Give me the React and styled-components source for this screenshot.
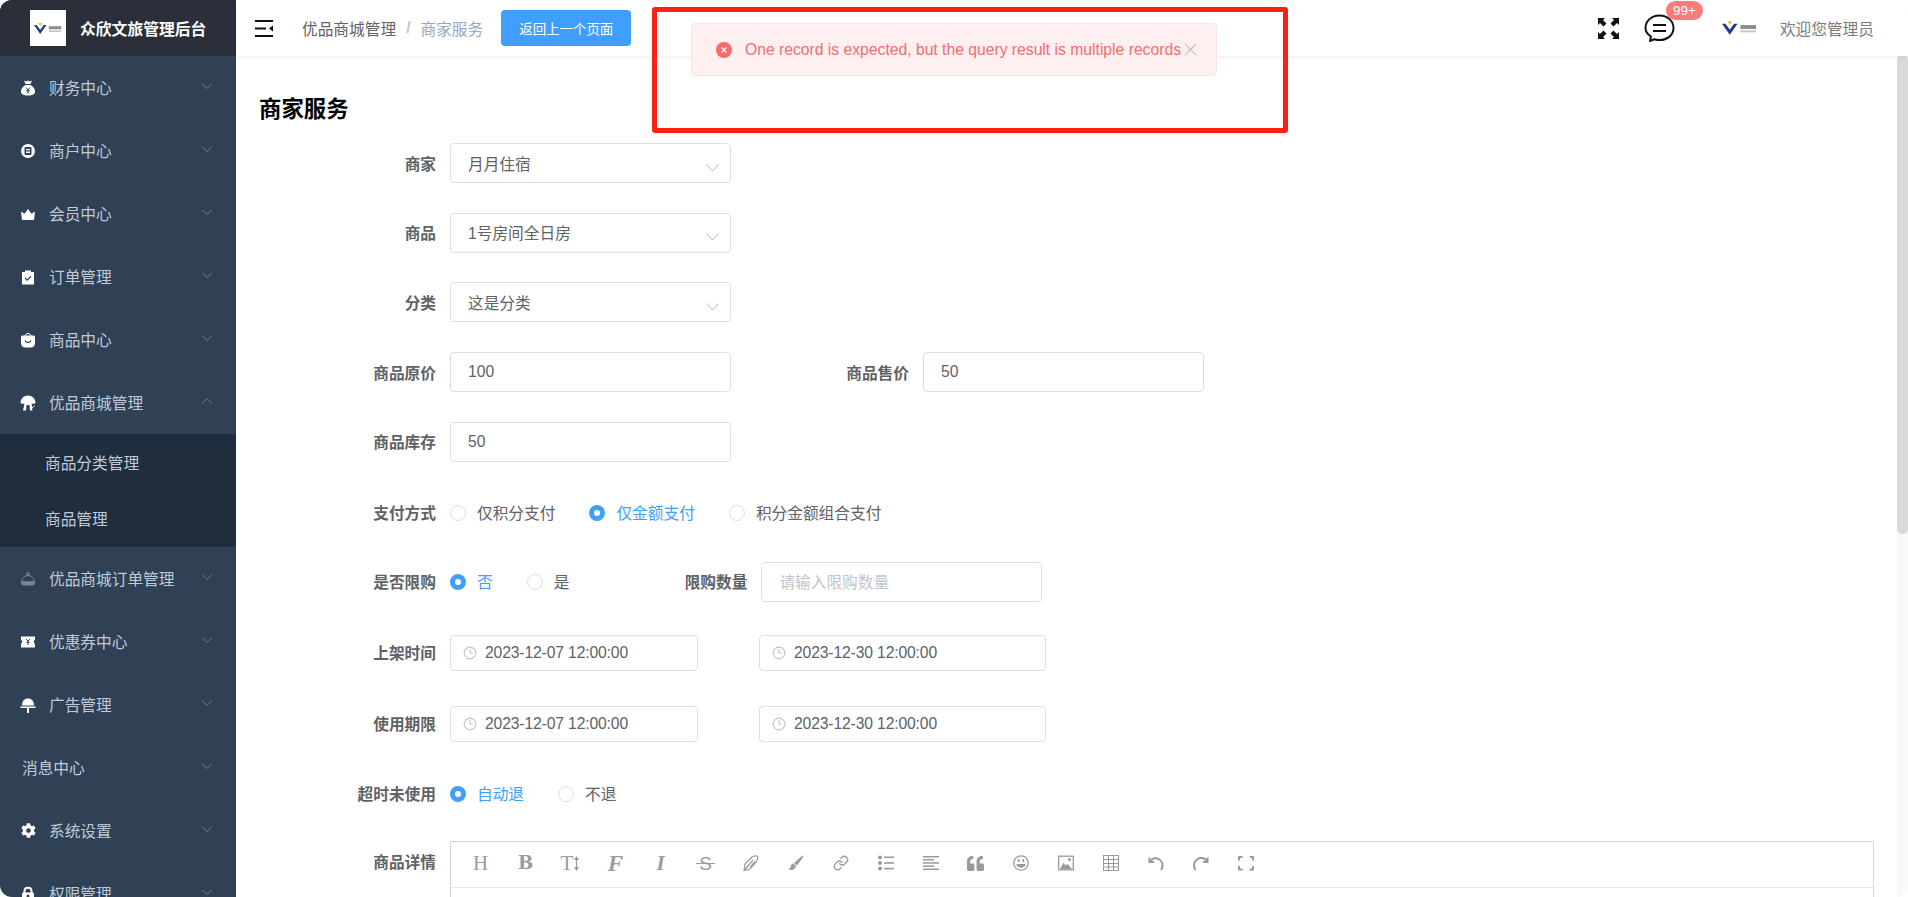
import React from "react";
import styled, { createGlobalStyle } from "styled-components";
import { FaCog, FaQuoteLeft } from "react-icons/fa";
import { LuLink, LuClock3 } from "react-icons/lu";

const FONT = `"Liberation Sans", "Noto Sans CJK SC", sans-serif`;

const Global = createGlobalStyle`
  html, body { margin: 0; padding: 0; height: 100%; overflow: hidden; background: #fff; }
  * { box-sizing: border-box; }
  body { font-family: ${FONT}; font-size: 15.7px; color: #606266; }
`;

const Frame = styled.div`
  position: relative;
  display: flex;
  width: 1908px;
  height: 897px;
  overflow: hidden;
  border-radius: 12px;
  background: #fff;
`;

const Sidebar = styled.aside`
  flex: 0 0 236px;
  height: 897px;
  overflow: hidden;
  background: #304156;
`;
const Brand = styled.div`
  display: flex;
  align-items: center;
  height: 56px;
  padding-left: 30px;
  background: #2b2f3a;
`;
const BrandLogo = styled.div`
  display: flex;
  align-items: center;
  justify-content: center;
  width: 36px;
  height: 36px;
  background: #fff;
`;
const BrandTitle = styled.span`
  margin-left: 14px;
  color: #fff;
  font-size: 15.8px;
  font-weight: 700;
`;
const MenuRow = styled.div`
  display: flex;
  align-items: center;
  height: 63px;
  padding-left: ${p => (p.$plain ? 22 : 20)}px;
  padding-right: 24px;
  color: #bfcbd9;
`;
const MenuIcon = styled.span`
  display: flex;
  align-items: center;
  justify-content: center;
  flex: 0 0 16px;
  margin-right: 13px;
  color: #fff;
`;
const MenuText = styled.span`
  flex: 1;
`;
const Chevron = styled.svg`
  width: 10px;
  height: 6px;
  margin-top: -4px;
  fill: none;
  stroke: #75808e;
  stroke-width: 1;
`;
const SubMenu = styled.div`
  height: 113px;
  background: #1f2d3d;
`;
const SubRow = styled.div`
  display: flex;
  align-items: center;
  height: 56.5px;
  padding-left: 45px;
  color: #bfcbd9;
`;

const Main = styled.main`
  flex: 1;
  min-width: 0;
  display: flex;
  flex-direction: column;
`;
const TopBar = styled.header`
  position: relative;
  z-index: 1;
  display: flex;
  align-items: center;
  flex: 0 0 56px;
  padding: 0 34px 0 19px;
  background: #fff;
  box-shadow: 0 1px 4px rgba(0, 21, 41, 0.08);
`;
const Crumbs = styled.div`
  display: flex;
  align-items: center;
  margin-left: 29px;
  color: #5f6266;
`;
const CrumbSep = styled.span`
  margin: 0 10px;
  color: #c0c4cc;
  font-weight: 700;
`;
const CrumbNow = styled.span`
  color: #97a8be;
`;
const BackButton = styled.button`
  width: 130px;
  height: 36px;
  margin-left: 18px;
  padding: 0;
  border: 0;
  border-radius: 4px;
  background: #409eff;
  color: #fff;
  font-family: ${FONT};
  font-size: 13.44px;
`;
const TopRight = styled.div`
  display: flex;
  align-items: center;
  margin-left: auto;
`;
const ChatWrap = styled.div`
  position: relative;
  display: flex;
  margin: 0 47px 0 24px;
`;
const Badge = styled.span`
  position: absolute;
  left: 22px;
  top: -13px;
  width: 37px;
  height: 19px;
  border-radius: 10px;
  background: #f97b7b;
  color: #fff;
  font-size: 13.44px;
  line-height: 19px;
  text-align: center;
`;
const Welcome = styled.span`
  margin-left: 23px;
  color: #7b7b7b;
`;

const Content = styled.div`
  flex: 1;
  overflow: hidden;
  padding-right: 34px;
`;
const Title = styled.h1`
  margin: 39px 0 18px 23px;
  height: 30px;
  color: #000;
  font-size: 22.4px;
  font-weight: 700;
  line-height: 30px;
`;
const Row = styled.div`
  display: flex;
  align-items: ${p => (p.$top ? "flex-start" : "center")};
  height: ${p => p.$h || 40}px;
  margin-bottom: ${p => p.$mb ?? 29.7}px;
`;
const Label = styled.label`
  flex: 0 0 ${p => p.$w || 214}px;
  padding-right: 14px;
  color: #606266;
  font-weight: 700;
  line-height: ${p => p.$lh || "normal"};
  text-align: right;
`;
const FieldBox = styled.div`
  display: flex;
  align-items: center;
  flex: 0 0 ${p => p.$w}px;
  height: ${p => p.$h || 40}px;
  margin-left: ${p => p.$ml || 0}px;
  padding: 0 ${p => (p.$date ? 8 : 17)}px;
  border: 1px solid #dcdfe6;
  border-radius: 4px;
  background: #fff;
  color: ${p => (p.$ph ? "#c0c4cc" : "#606266")};
`;
const SelectValue = styled.span`
  flex: 1;
`;
const SelectArrow = styled.svg`
  width: 13px;
  height: 8px;
  margin: 9px -6px 0 0;
  fill: none;
  stroke: #b4b8bf;
  stroke-width: 1;
`;
const DateIcon = styled(LuClock3)`
  flex: none;
  margin-left: 4px;
  color: #c0c4cc;
`;
const DateText = styled.span`
  margin-left: 8px;
  letter-spacing: -0.14px;
`;
const RadioItem = styled.span`
  display: inline-flex;
  align-items: center;
  margin-right: ${p => p.$mr ?? 34}px;
  color: ${p => (p.$on ? "#409eff" : "#606266")};
`;
const RadioDot = styled.span`
  width: 16px;
  height: 16px;
  margin-right: 11px;
  border-radius: 50%;
  border: ${p => (p.$on ? "5px solid #409eff" : "1px solid #dcdfe6")};
  background: #fff;
`;

const Editor = styled.div`
  flex: 1;
  height: 200px;
  border: 1px solid #c9d8db;
  border-bottom: 0;
`;
const EditorBar = styled.div`
  display: flex;
  align-items: center;
  height: 46px;
  padding: 0 0 2px 7px;
  border-bottom: 1px solid #e5e9eb;
`;
const ToolCell = styled.span`
  display: flex;
  align-items: center;
  justify-content: center;
  flex: 0 0 45px;
  height: 20px;
  color: #9a9a9a;
`;
const ToolGlyph = styled.span`
  position: relative;
  color: #9a9a9a;
  font-family: ${p => p.$family || `"Liberation Serif"`}, serif;
  font-size: ${p => p.$fs || 21}px;
  font-style: ${p => (p.$italic ? "italic" : "normal")};
  font-weight: ${p => (p.$bold ? 700 : 400)};
  line-height: 1;
`;
const StrikeGlyph = styled(ToolGlyph)`
  &::after {
    content: "";
    position: absolute;
    left: -3px;
    right: -3px;
    top: 50%;
    height: 1px;
    background: #9a9a9a;
  }
`;

const ScrollTrack = styled.div`
  position: absolute;
  right: 0;
  top: 55px;
  bottom: 0;
  width: 11px;
  background: #f9f9f9;
`;
const ScrollThumb = styled.div`
  position: absolute;
  right: 0;
  top: 55px;
  width: 11px;
  height: 479px;
  border-radius: 5px;
  background: #d9d9d9;
`;
const Toast = styled.div`
  position: absolute;
  left: 691px;
  top: 23px;
  z-index: 3;
  display: flex;
  align-items: center;
  width: 526px;
  height: 53px;
  padding-left: 24px;
  border: 1px solid #fde2e2;
  border-radius: 4px;
  background: #fef0f0;
  color: #f56c6c;
`;
const ToastText = styled.span`
  margin-left: 13px;
  white-space: nowrap;
`;
const ToastClose = styled.svg`
  flex: none;
  width: 13px;
  height: 13px;
  margin-left: 3px;
  fill: none;
  stroke: #c0c4cc;
  stroke-width: 1.2;
`;
const Annotation = styled.div`
  position: absolute;
  left: 652px;
  top: 7px;
  z-index: 4;
  width: 636px;
  height: 126px;
  border: 5px solid #fb2116;
  border-radius: 3px;
`;

const LogoMark = ({ w = 28, h = 11 }) => (
  <svg width={w} height={h} viewBox="0 0 36 14">
    <path d="M0 2.500h3.500l4.500 6 4.500-6H16l-8 11.500z" fill="#22398a" />
    <path d="M5.500 0h5L8 4z" fill="#f2b632" />
    <rect x="19" y="4" width="16" height="4" fill="#8d8d8d" />
    <rect x="19" y="9.500" width="16" height="2" fill="#c4c4c4" />
  </svg>
);

const I = ({ children, s = 16 }) => (
  <svg width={s} height={s} viewBox="0 0 16 16" fill="currentColor" style={{ flex: "none" }}>{children}</svg>
);
const D = "#304156";
const icons = {
  money: <I><path d="M4 .5l2.200 1L8 .5l1.800 1 2.200-1-1.500 3.500h-5z" /><path d="M5.500 5h5C13.500 7 15 9 15 11.500 15 14.500 12 15.500 8 15.500s-7-1-7-4C1 9 2.500 7 5.500 5z" /><path d="M6 7.500l2 2.500 2-2.500M8 10v3.500M6.200 10.800h3.600" stroke={D} fill="none" strokeWidth="1" /></I>,
  shop: <I><circle cx="8" cy="8" r="7" /><rect x="4.500" y="4" width="7" height="8" rx="1" fill={D} /><rect x="6" y="6" width="4" height="1.200" /><rect x="6" y="8.500" width="4" height="1.500" /></I>,
  crown: <I><path d="M1 5.500l3.500 2.300L8 3l3.500 4.800L15 5.500l-1 8.500H2z" /></I>,
  order: <I><path d="M2 3h3V1.500h6V3h3v12.500H2z" /><path d="M5 9l2.200 2.200L11 7.500" stroke={D} strokeWidth="1.200" fill="none" /></I>,
  goods: <I><path d="M5 4.500c0-4 6-4 6 0" fill="none" stroke="currentColor" /><path d="M2.500 3.500h11c1 0 1.500 1 1.500 2v5.500c0 3-2 4.500-4.500 4.500h-5C3 15.500 1 14 1 11V5.500c0-1 .5-2 1.500-2z" /><path d="M5 8.500c1 2.500 5 2.500 6 0" stroke={D} fill="none" strokeWidth="1.200" /></I>,
  mall: <I><path d="M.5 8C.5 3.500 4 .5 8 .5s7.500 3 7.500 7.500c-1.500 1-3 1-4 .5l1 7H10l-.5-5.500h-3L6 15.500H3l1.500-7C3.500 9 2 9 .5 8z" /><path d="M11 14l3.500-3.500" stroke="#fff" /></I>,
  cloche: <I><circle cx="8" cy="3" r="1.400" fill="none" stroke="#8b9096" /><path d="M1.500 11c0-3.500 3-6.500 6.500-6.500s6.500 3 6.500 6.500z" fill="none" stroke="#8b9096" /><path d="M1 10.500h14v1c0 2-1.500 3-3 3H4c-1.500 0-3-1-3-3z" fill="#7e858d" /></I>,
  coupon: <I><path d="M1 2.500h14V6c-1.500 0-1.500 3.500 0 3.500v4H1v-4c1.500 0 1.500-3.500 0-3.500z" /><path d="M6 5l2 2 2-2M8 7v4M6.300 8.300h3.400" stroke={D} fill="none" /></I>,
  lamp: <I><path d="M2 8.500c0-4.500 2.500-7 6-7s6 2.500 6 7z" /><rect x="0.500" y="9.500" width="15" height="1.500" /><rect x="7" y="11" width="2" height="5" /></I>,
  gear: <FaCog size={15} />,
  lock: <I><path d="M4.500 7V5c0-4.500 7-4.500 7 0v2" fill="none" stroke="currentColor" strokeWidth="2" /><rect x="2" y="6.500" width="12" height="9" rx="1.500" /><circle cx="8" cy="10" r="1.500" fill={D} /></I>,
};

const ChevronIcon = ({ up }) => (
  <Chevron viewBox="0 0 10 6"><path d={up ? "M0 5.500l5-5 5 5" : "M0 .5l5 5 5-5"} /></Chevron>
);

const menuTop = [
  ["money", "财务中心"], ["shop", "商户中心"], ["crown", "会员中心"], ["order", "订单管理"], ["goods", "商品中心"],
];
const menuBottom = [
  ["cloche", "优品商城订单管理"], ["coupon", "优惠券中心"], ["lamp", "广告管理"], [null, "消息中心"], ["gear", "系统设置"], ["lock", "权限管理"],
];

const MenuItem = ({ icon, text, up }) => (
  <MenuRow $plain={!icon}>
    {icon && <MenuIcon>{icons[icon]}</MenuIcon>}
    <MenuText>{text}</MenuText>
    <ChevronIcon up={up} />
  </MenuRow>
);

const SelectRow = ({ label, value }) => (
  <Row>
    <Label>{label}</Label>
    <FieldBox $w={281}>
      <SelectValue>{value}</SelectValue>
      <SelectArrow viewBox="0 0 13 8"><path d="M.5.5l6 6.500 6-6.500" /></SelectArrow>
    </FieldBox>
  </Row>
);

const Radio = ({ on, mr, children }) => (
  <RadioItem $on={on} $mr={mr}><RadioDot $on={on} />{children}</RadioItem>
);

const DateField = ({ w, ml, children }) => (
  <FieldBox $w={w} $h={36} $ml={ml} $date>
    <DateIcon size={14} />
    <DateText>{children}</DateText>
  </FieldBox>
);

const G = "#9a9a9a";
const tools = [
  <ToolGlyph>H</ToolGlyph>,
  <ToolGlyph $family={`"DejaVu Serif"`} $bold $fs={18}>B</ToolGlyph>,
  <><ToolGlyph $fs={21}>T</ToolGlyph><svg width="7" height="15" viewBox="0 0 7 15"><path d="M3.500 2v11" stroke={G} strokeWidth="1.200" /><path d="M1 4l2.500-4L6 4zM1 11l2.500 4L6 11z" fill={G} /></svg></>,
  <ToolGlyph $italic $bold $fs={23}>F</ToolGlyph>,
  <ToolGlyph $italic $bold $fs={21}>I</ToolGlyph>,
  <StrikeGlyph $family={`"Liberation Sans"`} $fs={19}>S</StrikeGlyph>,
  <I><g fill="none" stroke={G} strokeWidth="1.200"><path d="M1 15.500l1-6.500 7-7c2-1.500 5-1.500 5.500-.5.500 1.500-.5 5-2.500 7l-5 5.500z" /><path d="M4 12l6-7M7 12.500l5-6" /><path d="M1 15.500L5 11" /></g></I>,
  <I><path d="M15.500.5c.5 1-4 7-7 10l-2.500-2.500C9 5 14.500 0 15.500.5z" fill={G} /><path d="M5.500 8.500c-2 0-2.500 2-3 3.500-.3 1-1 1.500-2 2 2 1.500 6.500 1.500 7.500-3z" fill={G} /></I>,
  <LuLink size={16} />,
  <I><g fill={G}><circle cx="2" cy="2.500" r="2" /><circle cx="2" cy="8" r="2" /><circle cx="2" cy="13.500" r="2" /><rect x="6" y="1.500" width="10" height="1.600" /><rect x="6" y="7.200" width="10" height="1.600" /><rect x="6" y="12.800" width="10" height="1.600" /></g></I>,
  <I><g fill={G}><rect y="1" width="16" height="1.500" /><rect y="4" width="11" height="1.500" /><rect y="7.200" width="16" height="1.500" /><rect y="10.400" width="11" height="1.500" /><rect y="13.500" width="16" height="1.500" /></g></I>,
  <FaQuoteLeft size={17} />,
  <I><circle cx="8" cy="8" r="7.200" fill="none" stroke={G} strokeWidth="1.300" /><rect x="4.800" y="4" width="1.800" height="3.200" rx=".9" fill={G} /><rect x="9.400" y="4" width="1.800" height="3.200" rx=".9" fill={G} /><path d="M3.500 9h9c0 5-9 5-9 0z" fill={G} /></I>,
  <I><rect x=".7" y="1.200" width="14.600" height="13.600" fill="none" stroke={G} strokeWidth="1.300" /><path d="M2 14l3.500-6.500 2 3L9.500 9 14 14z" fill={G} /><circle cx="11.500" cy="4.500" r="1.500" fill={G} /></I>,
  <I><g fill="none" stroke={G} strokeWidth="1"><rect x=".5" y=".5" width="15" height="15" /><path d="M5.500.5v15M10.500.5v15M.5 4.500h15M.5 8.500h15M.5 12h15" /></g></I>,
  <I><path d="M3.500 4.500C6 3 9 3 11.500 4.500 15 7 15.500 11.500 13 15" fill="none" stroke={G} strokeWidth="2" /><path d="M.5 1.500v6.500h6.500z" fill={G} /></I>,
  <I><path d="M13 4.500C10 2.500 6.500 2.500 4 4.500.5 7 .2 11.500 2.500 15" fill="none" stroke={G} strokeWidth="2" /><path d="M15.500 1.500v6.500H9z" fill={G} /></I>,
  <I><path d="M1 5.500V2h3.500M11.500 2H15v3.500M15 11v3.500h-3.500M4.500 14.500H1V11" fill="none" stroke={G} strokeWidth="2" /></I>,
];

export default function App() {
  return (
    <Frame>
      <Global />
      <Sidebar>
        <Brand>
          <BrandLogo><LogoMark /></BrandLogo>
          <BrandTitle>众欣文旅管理后台</BrandTitle>
        </Brand>
        {menuTop.map(([i, t]) => <MenuItem key={t} icon={i} text={t} />)}
        <MenuItem icon="mall" text="优品商城管理" up />
        <SubMenu>
          <SubRow>商品分类管理</SubRow>
          <SubRow>商品管理</SubRow>
        </SubMenu>
        {menuBottom.map(([i, t]) => <MenuItem key={t} icon={i} text={t} />)}
      </Sidebar>

      <Main>
        <TopBar>
          <svg width="18" height="17" viewBox="0 0 18 17">
            <path d="M0 1h18M0 8.500h11M0 16h18" stroke="#111" strokeWidth="2" />
            <path d="M18 5.500v6l-4-3z" fill="#111" />
          </svg>
          <Crumbs>优品商城管理<CrumbSep>/</CrumbSep><CrumbNow>商家服务</CrumbNow></Crumbs>
          <BackButton>返回上一个页面</BackButton>
          <TopRight>
            <svg width="23" height="23" viewBox="0 0 23 23">
              <path d="M1 1h7L6 3l3.500 3.500-3 3L3 6 1 8zM22 1v7l-2-2-3.500 3.500-3-3L17 3l-2-2zM1 22v-7l2 2 3.500-3.500 3 3L6 20l2 2zM22 22h-7l2-2-3.500-3.500 3-3L20 17l2-2z" fill="#111" />
            </svg>
            <ChatWrap>
              <svg width="31" height="29" viewBox="0 0 31 29">
                <path d="M6 27l1-4.500C3.500 20.500 1.500 17.500 1.500 14 1.500 7 7.500 1.500 15.500 1.500S29.500 7 29.500 14 23.500 26 15.500 26c-2 0-3.500-.3-5-.8z" fill="#fff" stroke="#111" strokeWidth="2" strokeLinejoin="round" />
                <path d="M9 11h13M9 17h13" stroke="#111" strokeWidth="2" />
              </svg>
              <Badge>99+</Badge>
            </ChatWrap>
            <LogoMark w={35} h={14} />
            <Welcome>欢迎您管理员</Welcome>
          </TopRight>
        </TopBar>

        <Content>
          <Title>商家服务</Title>
          <SelectRow label="商家" value="月月住宿" />
          <SelectRow label="商品" value="1号房间全日房" />
          <SelectRow label="分类" value="这是分类" />
          <Row>
            <Label>商品原价</Label>
            <FieldBox $w={281}>100</FieldBox>
            <Label $w={192}>商品售价</Label>
            <FieldBox $w={281}>50</FieldBox>
          </Row>
          <Row $mb={31}>
            <Label>商品库存</Label>
            <FieldBox $w={281}>50</FieldBox>
          </Row>
          <Row $mb={29}>
            <Label>支付方式</Label>
            <Radio>仅积分支付</Radio>
            <Radio on>仅金额支付</Radio>
            <Radio>积分金额组合支付</Radio>
          </Row>
          <Row $mb={31}>
            <Label>是否限购</Label>
            <Radio on>否</Radio>
            <Radio mr={0}>是</Radio>
            <Label $w={192}>限购数量</Label>
            <FieldBox $w={281} $ph>请输入限购数量</FieldBox>
          </Row>
          <Row $mb={31}>
            <Label>上架时间</Label>
            <DateField w={248}>2023-12-07 12:00:00</DateField>
            <DateField w={287} ml={61}>2023-12-30 12:00:00</DateField>
          </Row>
          <Row $mb={30}>
            <Label>使用期限</Label>
            <DateField w={248}>2023-12-07 12:00:00</DateField>
            <DateField w={287} ml={61}>2023-12-30 12:00:00</DateField>
          </Row>
          <Row $mb={27}>
            <Label>超时未使用</Label>
            <Radio on>自动退</Radio>
            <Radio>不退</Radio>
          </Row>
          <Row $top $h={200} $mb={0}>
            <Label $lh="44px">商品详情</Label>
            <Editor>
              <EditorBar>
                {tools.map((t, i) => <ToolCell key={i}>{t}</ToolCell>)}
              </EditorBar>
            </Editor>
          </Row>
        </Content>
      </Main>

      <ScrollTrack />
      <ScrollThumb />
      <Toast>
        <svg width="16" height="16" viewBox="0 0 16 16" style={{ flex: "none" }}>
          <circle cx="8" cy="8" r="8" fill="#f56c6c" />
          <path d="M5.500 5.500l5 5M10.500 5.500l-5 5" stroke="#fff" strokeWidth="1.200" />
        </svg>
        <ToastText>One record is expected, but the query result is multiple records</ToastText>
        <ToastClose viewBox="0 0 13 13"><path d="M1 1l11 11M12 1L1 12" /></ToastClose>
      </Toast>
      <Annotation />
    </Frame>
  );
}
